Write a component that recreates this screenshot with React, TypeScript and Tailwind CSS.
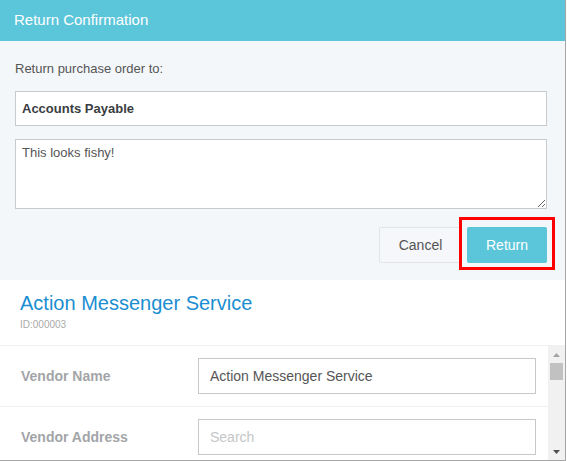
import React from "react";

function ScrollTrack() {
  return (
    <div className="flex w-[17px] shrink-0 flex-col bg-[#f1f1f1]">
      <div className="flex h-[17px] items-center justify-center">
        <svg width="7" height="4" viewBox="0 0 7 4">
          <polygon points="0,4 7,4 3.5,0" fill="#a3a3a3" />
        </svg>
      </div>
      <div className="mx-[2px] h-[17px] bg-[#c1c1c1]" />
      <div className="flex-1" />
      <div className="flex h-[17px] items-center justify-center">
        <svg width="7" height="4" viewBox="0 0 7 4">
          <polygon points="0,0 7,0 3.5,4" fill="#505050" />
        </svg>
      </div>
    </div>
  );
}

function FieldRow({
  label,
  value,
  placeholder,
}: {
  label: string;
  value?: string;
  placeholder?: string;
}) {
  return (
    <div className="grid h-[61px] shrink-0 grid-cols-[177px_338px] items-center border-b border-[#eef0f2] pl-[21px]">
      <span className="text-[14px] font-bold text-[#a2a5a8]">{label}</span>
      <input
        readOnly
        defaultValue={value}
        placeholder={placeholder}
        className="h-[36px] w-full border border-[#c6c8ca] bg-white px-[11px] text-[14px] text-[#555] outline-none placeholder:text-[#c4c6c8]"
      />
    </div>
  );
}

export default function App() {
  return (
    <div className="flex h-[461px] w-[566px] flex-col overflow-hidden border-r border-b border-[#a6a6a6] bg-white font-['Liberation_Sans',Arial,sans-serif]">
      <div className="flex h-[41px] shrink-0 items-center bg-[#5bc5d9] px-[14px] text-[15px] text-white">
        Return Confirmation
      </div>

      <div className="flex h-[239px] shrink-0 flex-col bg-[#f4f7fa] pl-[15px] pr-[18px] pt-[20px]">
        <p className="h-[16px] text-[13px] leading-[16px] text-[#555]">
          Return purchase order to:
        </p>
        <input
          readOnly
          defaultValue="Accounts Payable"
          className="mt-[14px] h-[35px] w-full border border-[#c8cacc] bg-white px-[6px] text-[13px] font-bold text-[#3a3d40] outline-none"
        />
        <textarea
          readOnly
          defaultValue="This looks fishy!"
          className="mt-[13px] h-[70px] w-full border border-[#c8cacc] bg-white px-[6px] py-[5px] text-[13px] leading-[16px] text-[#555] outline-none"
        />
        <div className="mt-[18px] flex justify-end gap-[5px]">
          <button className="h-[36px] w-[83px] rounded-[2px] border border-[#e2e5e8] bg-[#f5f7fa] text-[14px] text-[#555]">
            Cancel
          </button>
          <div className="relative">
            <button className="h-[36px] w-[80px] rounded-[2px] bg-[#5bc5d9] text-[14px] text-white">
              Return
            </button>
            <div className="pointer-events-none absolute -bottom-[7px] -left-[8px] -right-[8px] -top-[10px] border-[3px] border-[#ff0000]" />
          </div>
        </div>
      </div>

      <div className="flex h-[66px] shrink-0 flex-col border-b border-[#eef0f2] pl-[20px] pt-[11px]">
        <h2 className="text-[20px] leading-[24px] text-[#1b8ed1]">Action Messenger Service</h2>
        <span className="mt-[4px] text-[10px] leading-[12px] text-[#aaa]">ID:000003</span>
      </div>

      <div className="flex min-h-0 flex-1">
        <div className="flex min-w-0 flex-1 flex-col overflow-hidden">
          <FieldRow label="Vendor Name" value="Action Messenger Service" />
          <FieldRow label="Vendor Address" placeholder="Search" />
        </div>
        <ScrollTrack />
      </div>
    </div>
  );
}
